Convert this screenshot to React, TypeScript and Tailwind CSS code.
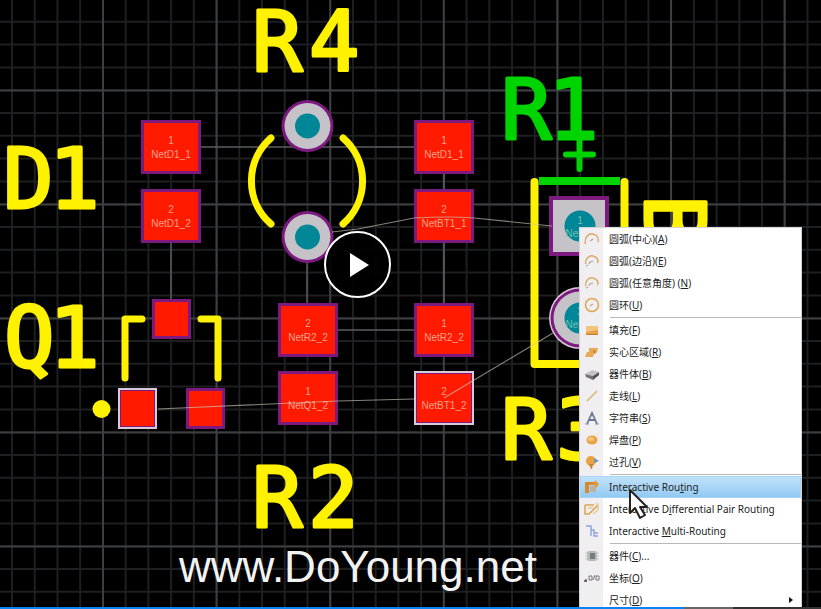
import type { ReactNode } from 'react';

const YELLOW = '#fff200';
const GREEN = '#00d400';
const PURPLE = '#7d1a80';

function range(start: number, step: number, end: number) {
  const out: number[] = [];
  for (let v = start; v < end; v += step) out.push(v);
  return out;
}

function Grid() {
  return (
    <g strokeWidth="2">
      <g stroke="#1e1f20">
        {range(12, 22.73, 821).map((x) => (
          <line key={x} x1={x} y1="0" x2={x} y2="609" />
        ))}
        {range(-1, 22.8, 609).map((y) => (
          <line key={y} x1="0" y1={y} x2="821" y2={y} />
        ))}
      </g>
      <g stroke="#3d3e40">
        {range(103, 113.6, 821).map((x) => (
          <line key={x} x1={x} y1="0" x2={x} y2="609" />
        ))}
        {range(90.5, 114, 609).map((y) => (
          <line key={y} x1="0" y1={y} x2="821" y2={y} />
        ))}
      </g>
    </g>
  );
}

type PadProps = { x: number; y: number; w?: number; h?: number; pin?: string; net?: string; selected?: boolean };

function Pad({ x, y, w = 60, h = 54, pin, net, selected }: PadProps) {
  return (
    <g>
      <rect x={x} y={y} width={w} height={h} fill={selected ? '#d9c9d9' : PURPLE} />
      {selected && <rect x={x + 2} y={y + 2} width={w - 4} height={h - 4} fill={PURPLE} />}
      <rect x={x + 3} y={y + 3} width={w - 6} height={h - 6} fill="#ff1a00" />
      {net && (
        <g fill="#ffa088" fontSize="10" textAnchor="middle" fontFamily="'Liberation Sans', sans-serif">
          <text x={x + w / 2} y={y + 24}>{pin}</text>
          <text x={x + w / 2} y={y + 38}>{net}</text>
        </g>
      )}
    </g>
  );
}

function Via({ x, y }: { x: number; y: number }) {
  return (
    <g>
      <circle cx={x} cy={y} r="26" fill={PURPLE} />
      <circle cx={x} cy={y} r="23" fill="#c5c2c8" />
      <circle cx={x} cy={y} r="12.5" fill="#008797" />
    </g>
  );
}

function Label({ x, y, color = YELLOW, children }: { x: string; y: number; color?: string; children: string }) {
  return (
    <text
      x={x}
      y={y}
      fill={color}
      stroke={color}
      strokeWidth="3"
      strokeLinejoin="round"
      fontSize="84"
      fontFamily="'DejaVu Sans Mono', monospace"
    >
      {children}
    </text>
  );
}

function Board() {
  return (
    <svg className="absolute inset-0 h-full w-full" viewBox="0 0 821 609" preserveAspectRatio="xMinYMin slice" role="img" aria-label="PCB layout">
      <Grid />
      <g stroke="#5a5d5f" strokeWidth="1.5">
        <path d="M200 147H414M171 242V300M307 262V304M444 174V189M444 242V303M338 330H414" />
      </g>

      <Label x="3 49" y={208}>D1</Label>
      <Label x="252 309" y={71}>R4</Label>
      <Label x="4 49" y={367}>Q1</Label>
      <Label x="252 308" y={527}>R2</Label>
      <Label x="501 556" y={459}>R3</Label>
      <Label x="501 548" y={139} color={GREEN}>R1</Label>
      <g transform="translate(645 195) rotate(90)">
        <Label x="0" y={0}>B</Label>
      </g>

      <Pad x={141} y={120} pin="1" net="NetD1_1" />
      <Pad x={141} y={189} pin="2" net="NetD1_2" />
      <Pad x={414} y={120} pin="1" net="NetD1_1" />
      <Pad x={414} y={189} pin="2" net="NetBT1_1" />
      <Pad x={278} y={303} pin="2" net="NetR2_2" />
      <Pad x={414} y={303} pin="1" net="NetR2_2" />
      <Pad x={278} y={371} pin="1" net="NetQ1_2" />
      <Pad x={414} y={371} pin="2" net="NetBT1_2" selected />
      <Pad x={152} y={299} w={39} h={40} />
      <Pad x={118} y={388} w={39} h={41} selected />
      <Pad x={186} y={388} w={39} h={41} />

      <Via x={307.5} y={126} />
      <Via x={307.5} y={237} />

      <g fill="none" stroke={YELLOW} strokeWidth="7" strokeLinecap="round" strokeLinejoin="round">
        <path d="M271 138A57 57 0 0 0 271 224M343 138A57 57 0 0 1 343 224" />
        <path d="M142 319H125V378M201 319H218V378" />
        <path d="M534.500 182V364H624.500V182" strokeWidth="8" />
      </g>
      <circle cx="101.500" cy="409" r="9" fill={YELLOW} />

      <g stroke={GREEN} fill="none">
        <path d="M539 181H620" strokeWidth="8" />
        <path d="M579.500 138V169M566 154.500H593" strokeWidth="6" strokeLinecap="round" />
      </g>

      <rect x="549" y="196" width="60" height="60" fill={PURPLE} />
      <rect x="553" y="200" width="52" height="52" fill="#c5c2c8" />
      <circle cx="580" cy="226" r="15.500" fill="#008797" />
      <circle cx="580" cy="318" r="31" fill="#d9c9d9" />
      <circle cx="580" cy="318" r="29.500" fill={PURPLE} />
      <circle cx="580" cy="318" r="26.500" fill="#c5c2c8" />
      <circle cx="580" cy="318" r="15.500" fill="#008797" />
      <g fill="#6fc0b0" fontSize="10" textAnchor="middle" fontFamily="'Liberation Sans', sans-serif">
        <text x="580" y="224">1</text>
        <text x="588" y="237">NetBT1_1</text>
        <text x="580" y="315">2</text>
        <text x="588" y="328">NetBT1_2</text>
      </g>

      <g fill="none" stroke="#c9c9b8" strokeWidth="1.2" opacity="0.65">
        <path d="M158 409L338 401L414 399" />
        <path d="M444 398L553 333" />
        <path d="M332 232L358 229L414 218Q450 216 474 218L552 226" />
      </g>

      <text x="179" y="582" fill="#f2f2f2" fontSize="44" fontFamily="'Liberation Sans', Arial, sans-serif">
        www.DoYoung.net
      </text>
    </svg>
  );
}

function Icon({ children }: { children: ReactNode }) {
  return (
    <svg className="h-4 w-4 shrink-0" viewBox="0 0 16 16" fill="none" aria-hidden="true">
      {children}
    </svg>
  );
}

const arcIcon = (
  <Icon>
    <path d="M1.500 13C0 6 5 2 9 3C13 4 15 7 14 11" stroke="#dda766" strokeWidth="1.4" />
    <path d="M6 10L9 8" stroke="#b7a99a" strokeWidth="1.5" />
  </Icon>
);

const edgeArcIcon = (
  <Icon>
    <path d="M1.500 11C1 6 5 2 9 3C13 4 15 7 13.500 10" stroke="#dda766" strokeWidth="1.4" />
    <path d="M2 13L4 12M5 11L6 9L9 8" stroke="#b7a99a" strokeWidth="1.3" />
  </Icon>
);

const circleIcon = (
  <Icon>
    <circle cx="8" cy="8" r="6.500" stroke="#e0a553" strokeWidth="1.5" />
    <path d="M6 9L9 7" stroke="#c9a67a" strokeWidth="1.4" />
  </Icon>
);

const fillIcon = (
  <Icon>
    <path d="M2 4H14V13H2Z" fill="#e6a047" />
    <path d="M2 4H14V8L2 10Z" fill="#f3c47b" />
    <path d="M2 12.500H14" stroke="#bd8238" />
  </Icon>
);

const regionIcon = (
  <Icon>
    <path d="M5 4H14L13 9H10L9 13H1L3 8H5Z" fill="#e8a855" />
    <path d="M9 7H11L10 10" stroke="#b5772f" />
  </Icon>
);

const bodyIcon = (
  <Icon>
    <path d="M1 8L8 4L15 6L9 10Z" fill="#c4c4c4" />
    <path d="M1 8L9 10V14L2 11Z" fill="#747474" />
    <path d="M9 10L15 6V9L9 14Z" fill="#515151" />
  </Icon>
);

const lineIcon = (
  <Icon>
    <path d="M3 13L13 3" stroke="#d6b66f" strokeWidth="1.4" />
  </Icon>
);

const stringIcon = (
  <Icon>
    <path d="M3 14L8 3L13 14M5 10H11" stroke="#6b7796" strokeWidth="1.8" />
    <path d="M1 14H5M11 14H15" stroke="#8b94aa" />
  </Icon>
);

const padIcon = (
  <Icon>
    <ellipse cx="8" cy="8" rx="5.500" ry="4.500" fill="#e9a342" />
    <ellipse cx="7" cy="7" rx="3" ry="2" fill="#f5c67d" />
  </Icon>
);

const viaIcon = (
  <Icon>
    <circle cx="7" cy="7" r="5" fill="#e9a342" />
    <path d="M5 10H9L8 15H7Z" fill="#c9822f" />
    <path d="M10 4L15 7L10 9Z" fill="#5f9bb8" />
  </Icon>
);

const routeIcon = (
  <Icon>
    <path d="M1 3H11V6H5V14H1Z" fill="#d98a2f" />
    <path d="M6 7H12V13H6Z" fill="#b9b3a6" />
    <path d="M11 1L15 5L12 9L10 6Z" fill="#e39a3e" />
  </Icon>
);

const diffIcon = (
  <Icon>
    <path d="M1 4H10M1 4V13H5L14 4" stroke="#dda44e" strokeWidth="1.5" />
    <path d="M4 7H9M12 2L14 4V9L9 13" stroke="#e8c98f" strokeWidth="1.3" />
  </Icon>
);

const multiIcon = (
  <Icon>
    <path d="M2 3H7V13M7 7H10V13H14M10 10H14" stroke="#8ea2dd" strokeWidth="1.4" />
  </Icon>
);

const partIcon = (
  <Icon>
    <rect x="3" y="3" width="10" height="10" rx="2" fill="#b5bbba" />
    <rect x="6" y="5" width="5" height="6" fill="#747c7c" />
    <path d="M1 5H3M1 8H3M1 11H3M13 5H15M13 8H15M13 11H15" stroke="#c3c8c8" />
  </Icon>
);

const coordIcon = (
  <Icon>
    <path d="M0 11H3M2 9V12" stroke="#555" strokeWidth="1.3" />
    <path d="M5 10V6H8V10ZM9 10L11 5M12 10V6H15V10Z" stroke="#777" />
  </Icon>
);

type Item = { icon?: ReactNode; pre: string; hot: string; post: string; active?: boolean; submenu?: boolean };

const groups: Item[][] = [
  [
    { icon: arcIcon, pre: '圆弧(中心)(', hot: 'A', post: ')' },
    { icon: edgeArcIcon, pre: '圆弧(边沿)(', hot: 'E', post: ')' },
    { icon: edgeArcIcon, pre: '圆弧(任意角度) (', hot: 'N', post: ')' },
    { icon: circleIcon, pre: '圆环(', hot: 'U', post: ')' },
  ],
  [
    { icon: fillIcon, pre: '填充(', hot: 'F', post: ')' },
    { icon: regionIcon, pre: '实心区域(', hot: 'R', post: ')' },
    { icon: bodyIcon, pre: '器件体(', hot: 'B', post: ')' },
    { icon: lineIcon, pre: '走线(', hot: 'L', post: ')' },
    { icon: stringIcon, pre: '字符串(', hot: 'S', post: ')' },
    { icon: padIcon, pre: '焊盘(', hot: 'P', post: ')' },
    { icon: viaIcon, pre: '过孔(', hot: 'V', post: ')' },
  ],
  [
    { icon: routeIcon, pre: 'Interactive Rou', hot: 't', post: 'ing', active: true },
    { icon: diffIcon, pre: 'Interactive D', hot: 'i', post: 'fferential Pair Routing' },
    { icon: multiIcon, pre: 'Interactive ', hot: 'M', post: 'ulti-Routing' },
  ],
  [
    { icon: partIcon, pre: '器件(', hot: 'C', post: ')...' },
    { icon: coordIcon, pre: '坐标(', hot: 'O', post: ')' },
    { pre: '尺寸(', hot: 'D', post: ')', submenu: true },
  ],
];

function MenuItem({ item }: { item: Item }) {
  return (
    <button
      type="button"
      role="menuitem"
      className={`flex h-[22px] w-full items-center text-left whitespace-nowrap ${
        item.active ? 'bg-linear-to-b from-[#c3e3fb] to-[#8fc8f2] ring-1 ring-[#a5d4f6] ring-inset' : ''
      }`}
    >
      <span className="flex w-6 shrink-0 justify-center">{item.icon}</span>
      <span className="grow pl-[5px]">
        {item.pre}
        <u>{item.hot}</u>
        {item.post}
      </span>
      {item.submenu && (
        <svg className="mr-2 h-1.5 w-1" viewBox="0 0 4 6" fill="#111" aria-hidden="true">
          <path d="M0 0L4 3L0 6Z" />
        </svg>
      )}
    </button>
  );
}

function ContextMenu() {
  return (
    <div
      role="menu"
      className="absolute top-[227px] left-[579px] w-[223px] border border-[#d5d5d5] bg-white bg-linear-to-r from-[#f0eef0] from-[23px] to-white to-[23px] font-['Noto_Sans','Noto_Sans_CJK_SC',sans-serif] text-[10px] leading-4 text-[#222]"
    >
      {groups.map((items, i) => (
        <div key={i}>
          {i > 0 && <div role="separator" className="my-px ml-[30px] h-px bg-[#b9b9b9]" />}
          {items.map((item) => (
            <MenuItem key={item.pre} item={item} />
          ))}
        </div>
      ))}
    </div>
  );
}

export default function App() {
  return (
    <main className="relative h-screen w-full overflow-hidden bg-black">
      <Board />
      <ContextMenu />
      <svg className="pointer-events-none absolute top-[488px] left-[628px] h-8 w-6" viewBox="0 0 24 32" aria-hidden="true">
        <path d="M2 2V25L7 20L12 30L17 27L12 19H19Z" fill="#fff" stroke="#222" strokeWidth="2" strokeLinejoin="round" />
      </svg>
      <button
        type="button"
        aria-label="Play"
        className="absolute top-[231px] left-[324px] flex size-[67px] items-center justify-center rounded-full border-2 border-white bg-black/90"
      >
        <svg className="ml-1 h-6 w-5" viewBox="0 0 20 24" fill="#fff" aria-hidden="true">
          <path d="M0 0L19 12L0 24Z" />
        </svg>
      </button>
      <div className="absolute inset-x-0 bottom-0 flex h-0.5 bg-[#333]">
        <div className="w-5/6 bg-[#0a84f5]" />
        <div className="w-[6%] bg-[#666]" />
      </div>
    </main>
  );
}
